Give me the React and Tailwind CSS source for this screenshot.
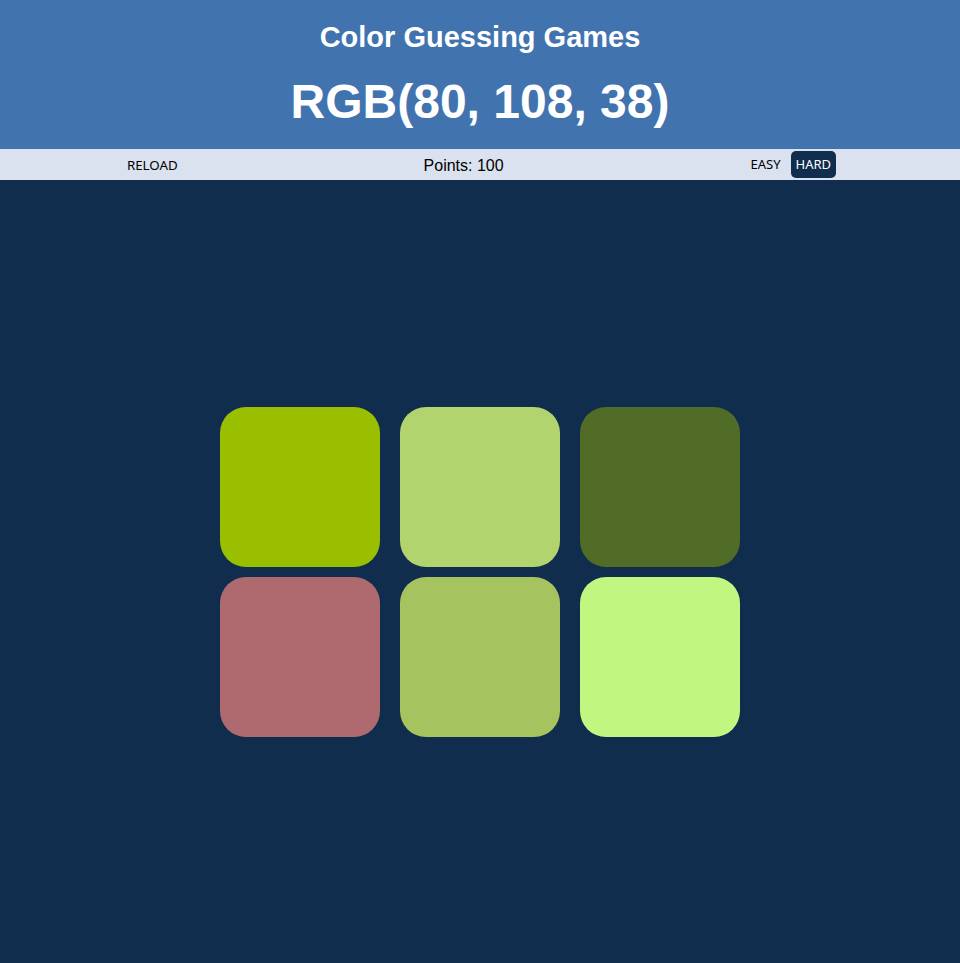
export default function App() {
  const colors = ["#9abf00", "#b1d46e", "#506c26", "#af6a70", "#a5c460", "#c1f780"];
  return (
    <div className="min-h-[963px] flex flex-col bg-[#112d4e]">
      <header className="h-[149px] bg-[#4173af] text-white flex flex-col items-center font-['Liberation_Sans',Arial,sans-serif] font-bold">
        <h1 className="mt-[19px] text-[29px] leading-[36px]">Color Guessing Games</h1>
        <h2 className="mt-[19px] text-[48px] leading-[56px]">RGB(80, 108, 38)</h2>
      </header>
      <div className="h-[31px] bg-[#dae2ef] flex items-center justify-around text-black">
        <button className="pl-[6px] pr-[4px] h-[27px] font-['Noto_Sans',sans-serif] text-[13.33px] mt-[2px]">RELOAD</button>
        <span className="font-['Liberation_Sans',Arial,sans-serif] text-[16px] mt-[3px]">Points: 100</span>
        <div className="flex items-center gap-[5px] mr-[3px]">
          <button className="px-[5px] h-[27px] font-['Noto_Sans',sans-serif] text-[13px] pt-[1px]">EASY</button>
          <button className="px-[5px] h-[27px] rounded-[5px] bg-[#112d4e] text-white font-['Noto_Sans',sans-serif] text-[13px] pt-[1px]">HARD</button>
        </div>
      </div>
      <main className="flex-1 flex items-center justify-center">
        <div className="grid grid-cols-[160px_160px_160px] gap-x-[20px] gap-y-[10px]">
          {colors.map((c, i) => (
            <div key={i} className="w-[160px] h-[160px] rounded-[26px]" style={{ backgroundColor: c }} />
          ))}
        </div>
      </main>
    </div>
  );
}
